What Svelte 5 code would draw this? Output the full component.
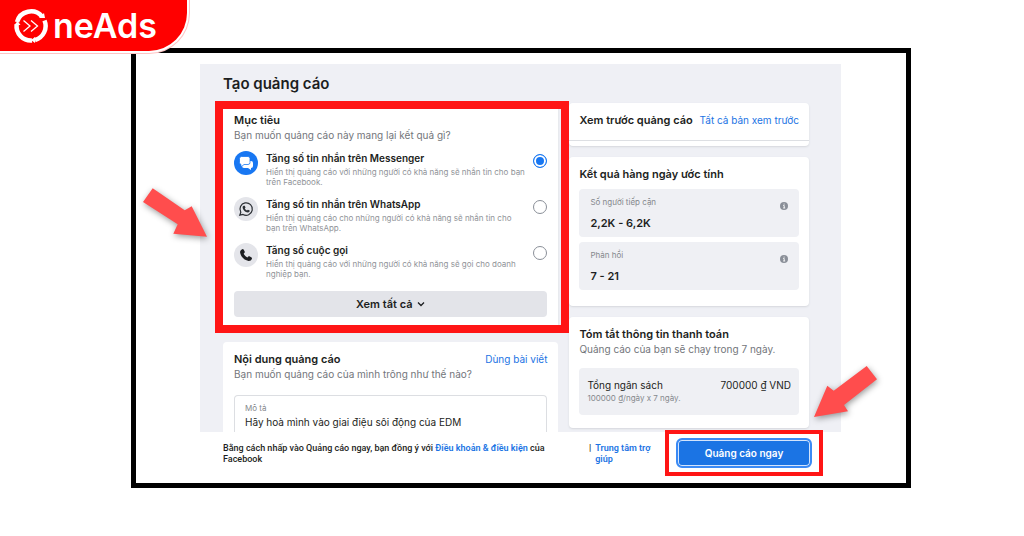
<script lang="ts">
	interface Goal {
		id: string;
		title: string;
		text: string;
	}

	const goals: Goal[] = [
		{
			id: 'messenger',
			title: 'Tăng số tin nhắn trên Messenger',
			text: 'Hiển thị quảng cáo với những người có khả năng sẽ nhắn tin cho bạn trên Facebook.'
		},
		{
			id: 'whatsapp',
			title: 'Tăng số tin nhắn trên WhatsApp',
			text: 'Hiển thị quảng cáo cho những người có khả năng sẽ nhắn tin cho bạn trên WhatsApp.'
		},
		{
			id: 'call',
			title: 'Tăng số cuộc gọi',
			text: 'Hiển thị quảng cáo với những người có khả năng sẽ gọi cho doanh nghiệp bạn.'
		}
	];

	const estimates = [
		{ label: 'Số người tiếp cận', value: '2,2K - 6,2K' },
		{ label: 'Phản hồi', value: '7 - 21' }
	];

	let selected = $state('messenger');
	let description = $state('Hãy hoà mình vào giai điệu sôi động của EDM');
</script>

<div class="page">
	<header class="brand">
		<svg class="brand-mark" viewBox="0 0 36 36" aria-hidden="true">
			<g fill="none" stroke="#fff">
				<path d="M4 14A14.5 14.5 0 0 1 29 8.500" stroke-width="4.500" />
				<path d="M31.500 12.500A14.500 14.500 0 0 1 22 32" stroke-width="4.500" />
				<path d="M19 32.500A14.500 14.500 0 0 1 3.600 16.500" stroke-width="4.500" />
				<path d="M10.500 12.500l6.500 5.500-6.500 5.500M18 12.500l6.500 5.500-6.500 5.500" stroke-width="1.300" />
			</g>
			<path d="M26 10h6l-1-5zM22 29v6l-4-3zM1.500 17l3-4 3 4z" fill="#fff" />
		</svg>
		<span>neAds</span>
	</header>

	<main class="frame">
		<div class="dialog">
			<h1>Tạo quảng cáo</h1>
			<div class="columns">
				<div class="column">
					<section class="card goals">
						<h2>Mục tiêu</h2>
						<p class="sub">Bạn muốn quảng cáo này mang lại kết quả gì?</p>
						<div class="goal-list">
							{#each goals as goal (goal.id)}
								<label class="goal">
									<span class="goal-icon" class:blue={goal.id === 'messenger'}>
										<svg viewBox="0 0 24 24" aria-hidden="true">
											{#if goal.id === 'messenger'}
												<path
													d="M10 10h7a2 2 0 0 1 2 2v3a2 2 0 0 1-2 2v2l-3-2h-4a2 2 0 0 1-2-2v-3a2 2 0 0 1 2-2z"
													fill="#fff"
												/>
												<path
													d="M7.500 5.500h6.500a2 2 0 0 1 2 2v4a2 2 0 0 1-2 2h-4l-3 2.500v-2.500a2 2 0 0 1-1.500-2v-4a2 2 0 0 1 2-2z"
													fill="#fff"
													stroke="#1877f2"
													stroke-width=".8"
												/>
											{:else if goal.id === 'whatsapp'}
												<path
													d="M6.800 15.200A6.200 6.200 0 1 1 9 17.400L5.800 18.200z"
													fill="none"
													stroke="#2b2f34"
													stroke-width="1.200"
												/>
												<path
													d="M9.800 8.700l1 .1.700 1.800-.7.900c.5 1 1.200 1.600 2.200 2.100l.9-.9 1.800.8c.1 1.200-.7 1.900-1.800 2-2.600-.2-5.200-2.700-5.300-5.200 0-.7.500-1.500 1.200-1.600z"
													fill="#2b2f34"
												/>
											{:else}
												<path
													d="M8.300 6.200c.5-.3 1-.1 1.300.4l1.100 2c.2.500.1.900-.2 1.200l-.8.900c.8 1.700 2 2.900 3.700 3.700l.9-.9c.4-.4.800-.4 1.200-.2l2 1.100c.5.300.6.800.4 1.300-.6 1.500-1.700 2.300-3.300 2.200-4.300-.6-7.900-4.200-8.500-8.400-.1-1.600.700-2.700 2.200-3.300z"
													fill="#1c1e21"
												/>
											{/if}
										</svg>
									</span>
									<span class="goal-body">
										<strong>{goal.title}</strong>
										<span class="goal-text">{goal.text}</span>
									</span>
									<input type="radio" name="goal" value={goal.id} bind:group={selected} />
								</label>
							{/each}
						</div>
						<button class="more" type="button">
							Xem tất cả
							<svg viewBox="0 0 8 8" aria-hidden="true"><path d="M1 2.500l3 3 3-3" /></svg>
						</button>
					</section>

					<section class="card content">
						<div class="card-head">
							<h2>Nội dung quảng cáo</h2>
							<a href="#post">Dùng bài viết</a>
						</div>
						<p class="sub">Bạn muốn quảng cáo của mình trông như thế nào?</p>
						<div class="field">
							<label for="description">Mô tả</label>
							<input id="description" type="text" bind:value={description} />
						</div>
					</section>
				</div>

				<div class="column">
					<section class="card preview">
						<div class="card-head">
							<h2>Xem trước quảng cáo</h2>
							<a href="#preview">Tất cả bản xem trước</a>
						</div>
					</section>

					<section class="card results">
						<h2>Kết quả hàng ngày ước tính</h2>
						{#each estimates as item (item.label)}
							<div class="tile estimate">
								<div>
									<p class="small">{item.label}</p>
									<p class="value">{item.value}</p>
								</div>
								<svg class="info" viewBox="0 0 8 8" aria-hidden="true">
									<circle cx="4" cy="4" r="4" />
									<path d="M3.200 3.500H4.200V6M3.200 6h2M4.100 1.600v1" />
								</svg>
							</div>
						{/each}
					</section>

					<section class="card payment">
						<h2>Tóm tắt thông tin thanh toán</h2>
						<p class="sub">Quảng cáo của bạn sẽ chạy trong 7 ngày.</p>
						<div class="tile budget">
							<div class="budget-row">
								<span>Tổng ngân sách</span>
								<span>700000 ₫ VND</span>
							</div>
							<p class="small">100000 ₫/ngày x 7 ngày.</p>
						</div>
					</section>
				</div>
			</div>
		</div>

		<footer class="footer">
			<p class="terms">
				Bằng cách nhấp vào Quảng cáo ngay, bạn đồng ý với
				<a href="#terms">Điều khoản &amp; điều kiện</a> của Facebook
			</p>
			<div class="help">
				<span>|</span>
				<a href="#help">Trung tâm trợ giúp</a>
			</div>
			<div class="submit-wrap">
				<button class="submit" type="button">Quảng cáo ngay</button>
			</div>
		</footer>

		<svg class="arrow arrow-left" viewBox="0 0 80 68" aria-hidden="true">
			<path d="M14.700 8.300L5 22l34.700 22.300-4.400 9.400L69 56.700 53.700 26.300l-7 4z" />
		</svg>
		<svg class="arrow arrow-right" viewBox="0 0 80 72" aria-hidden="true">
			<path d="M60.700 8L71 21.300 38 47l4 6.300L8 59l13.300-31.300 6.400 5z" />
		</svg>
	</main>
</div>

<style>
	:global(body) {
		margin: 0;
		background: #fff;
	}

	.page {
		position: relative;
		padding: 48px 113px 48px 131px;
		font-family: Inter, 'Liberation Sans', sans-serif;
		font-size: 11px;
		color: #1c1e21;
	}

	h1,
	h2,
	p {
		margin: 0;
	}

	a {
		color: #1b74e4;
		text-decoration: none;
	}

	button,
	input {
		font-family: inherit;
		color: inherit;
	}

	/* brand tab lies over the frame's corner */
	.brand {
		position: absolute;
		top: 0;
		left: 0;
		z-index: 1;
		display: flex;
		align-items: center;
		gap: 4px;
		box-sizing: border-box;
		height: 51px;
		padding: 0 30px 0 13px;
		border-radius: 0 0 38px 0;
		background: #f00;
		box-shadow:
			0 0 0 2px #fff,
			0 0 0 3px #ffc4c4;
		color: #fff;
		font-size: 34px;
		font-weight: 600;
		line-height: 48px;
	}

	.brand-mark {
		width: 36px;
		height: 36px;
	}

	.frame {
		position: relative;
		padding: 11px 65px 0 64px;
		border: 5px solid #000;
	}

	.dialog {
		padding: 10px 32px 4px 23px;
		background: #eff0f5;
	}

	h1 {
		margin-bottom: 9px;
		font-size: 15px;
		font-weight: 600;
		line-height: 20px;
	}

	h2 {
		font-size: 11px;
		font-weight: 600;
		line-height: 16px;
	}

	.columns {
		display: grid;
		grid-template-columns: 7fr 5fr;
		gap: 11px;
	}

	.column {
		display: flex;
		flex-direction: column;
		gap: 11px;
		min-width: 0;
	}

	.card {
		padding: 9px 10px 14px;
		border-radius: 4px;
		background: #fff;
		box-shadow: 0 1px 2px #d5d7dc;
	}

	.card-head {
		display: flex;
		justify-content: space-between;
		align-items: center;
		white-space: nowrap;
	}

	.card-head a {
		font-size: 10px;
	}

	.sub {
		color: #73767b;
		font-size: 10px;
		line-height: 14px;
	}

	.small {
		color: #85888d;
		font-size: 8px;
		line-height: 12px;
	}

	.goals {
		position: relative;
		padding: 9px 11px 14px;
	}

	.goals::after {
		content: '';
		position: absolute;
		inset: -2px -11px -2px -8px;
		z-index: 1;
		border: 8px solid #ff1515;
		pointer-events: none;
	}

	.goal-list {
		display: flex;
		flex-direction: column;
		gap: 10px;
		margin: 9px 0 12px;
	}

	.goal {
		display: flex;
		align-items: flex-start;
		gap: 8px;
	}

	.goal-icon {
		flex: none;
		width: 24px;
		height: 24px;
		border-radius: 50%;
		background: #e4e5ea;
	}

	.goal-icon.blue {
		background: #1877f2;
	}

	.goal-icon svg {
		display: block;
	}

	.goal-body {
		flex: 1;
	}

	.goal strong {
		display: block;
		margin-bottom: 2px;
		font-size: 10px;
		font-weight: 600;
		line-height: 14px;
	}

	.goal-text {
		display: block;
		color: #909398;
		font-size: 8px;
		line-height: 10px;
	}

	.goal input {
		appearance: none;
		flex: none;
		box-sizing: border-box;
		width: 14px;
		height: 14px;
		margin: 3px 0 0;
		border: 1px solid #8a8f98;
		border-radius: 50%;
		background: #fff;
	}

	.goal input:checked {
		border-color: #1877f2;
		background: #1877f2;
		box-shadow: inset 0 0 0 2px #fff;
	}

	.more {
		display: flex;
		justify-content: center;
		align-items: center;
		gap: 5px;
		width: 100%;
		height: 26px;
		padding: 0;
		border: 0;
		border-radius: 4px;
		background: #e3e4e9;
		font-size: 11px;
		font-weight: 600;
	}

	.more svg {
		width: 8px;
		height: 8px;
		fill: none;
		stroke: #1c1e21;
		stroke-width: 1.3;
	}

	/* runs on under the footer, so it has no bottom edge */
	.content {
		display: flex;
		flex-direction: column;
		flex: 1;
		margin-bottom: -4px;
		padding: 9px 11px 0;
		border-radius: 4px 4px 0 0;
		box-shadow: none;
	}

	.field {
		display: flex;
		flex-direction: column;
		flex: 1;
		margin-top: 14px;
		padding: 6px 10px 0;
		border: 1px solid #dcdee2;
		border-bottom: 0;
		border-radius: 4px 4px 0 0;
	}

	.field label {
		color: #85888d;
		font-size: 8px;
		line-height: 12px;
	}

	.field input {
		height: 16px;
		padding: 0;
		border: 0;
		background: none;
		font-size: 10px;
		outline: none;
	}

	.preview {
		padding: 0 0 5px;
	}

	.preview .card-head {
		padding: 9px 10px 12px;
		border-bottom: 1px solid #dddfe3;
	}

	.results {
		padding-bottom: 16px;
	}

	.tile {
		border-radius: 4px;
		background: #eff0f4;
	}

	.estimate {
		display: flex;
		justify-content: space-between;
		margin-top: 5px;
		padding: 7px 11px 6px;
	}

	h2 + .estimate {
		margin-top: 7px;
	}

	.value {
		margin-top: 7px;
		font-size: 11px;
		font-weight: 600;
		line-height: 16px;
	}

	.info {
		width: 8px;
		height: 8px;
		margin-top: 6px;
		fill: #8a8f98;
	}

	.info path {
		fill: none;
		stroke: #fff;
		stroke-width: 0.9;
	}

	.payment {
		padding-bottom: 13px;
	}

	.budget {
		margin-top: 12px;
		padding: 10px 8px 11px;
	}

	.budget-row {
		display: flex;
		justify-content: space-between;
		font-size: 10px;
		line-height: 14px;
	}

	.footer {
		display: flex;
		align-items: flex-start;
		padding: 6px 29px 15px 23px;
	}

	.terms,
	.help {
		padding-top: 5px;
		font-family: Roboto, 'Liberation Sans', sans-serif;
		font-size: 9px;
		font-weight: 500;
		line-height: 11px;
	}

	.terms {
		flex: 1;
	}

	.terms a,
	.help a {
		font-weight: 600;
	}

	.help {
		display: flex;
		gap: 4px;
		width: 66px;
		margin: 0 21px 0 32px;
	}

	.submit-wrap {
		position: relative;
	}

	.submit-wrap::after {
		content: '';
		position: absolute;
		inset: -8px -11px;
		border: 4px solid #ff1515;
		pointer-events: none;
	}

	.submit {
		width: 136px;
		height: 30px;
		padding: 0;
		border: 2px solid #3b8af5;
		border-radius: 6px;
		background: #1b74e4;
		box-shadow: inset 0 0 0 1px #d3e4fc;
		color: #fff;
		font-size: 10px;
		font-weight: 600;
	}

	.arrow {
		position: absolute;
		fill: #ff4d4d;
		filter: drop-shadow(1px 2px 3px rgba(0, 0, 0, 0.4));
	}

	.arrow-left {
		top: 127px;
		left: 2px;
		width: 80px;
		height: 68px;
	}

	.arrow-right {
		right: 20px;
		bottom: 53px;
		width: 80px;
		height: 72px;
	}
</style>
